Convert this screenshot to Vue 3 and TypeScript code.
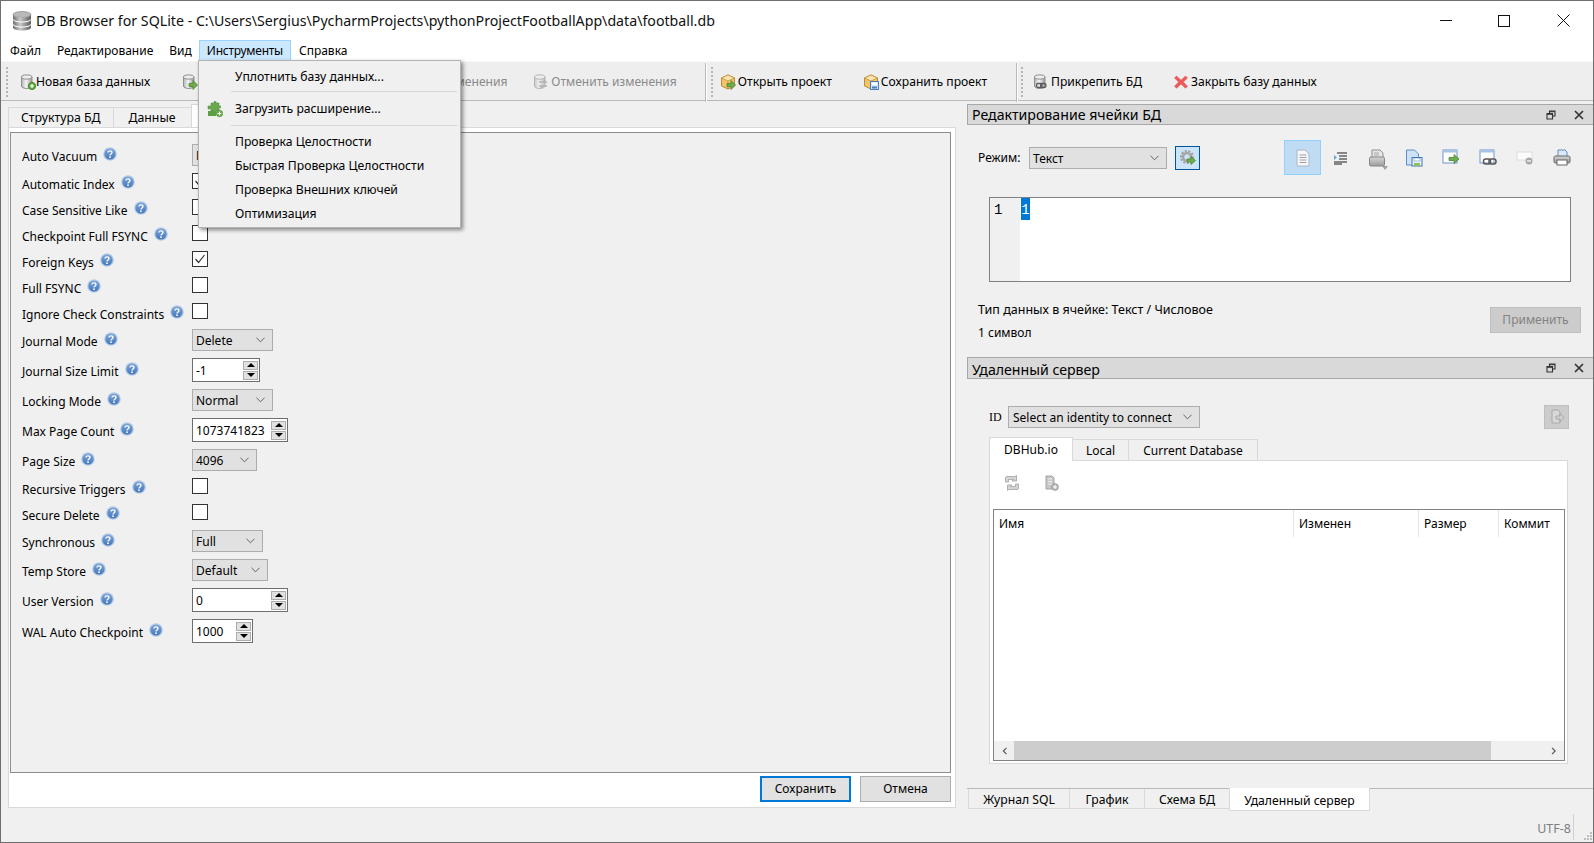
<script setup lang="ts">
interface Row { label: string; kind: 'combo' | 'check' | 'spin'; val?: string; w?: number; on?: boolean; gap: number }
const rows: Row[] = [
  { label: 'Auto Vacuum', kind: 'combo', val: 'None', w: 81, gap: 0 },
  { label: 'Automatic Index', kind: 'check', on: true, gap: 0 },
  { label: 'Case Sensitive Like', kind: 'check', gap: 0 },
  { label: 'Checkpoint Full FSYNC', kind: 'check', gap: 0 },
  { label: 'Foreign Keys', kind: 'check', on: true, gap: 0 },
  { label: 'Full FSYNC', kind: 'check', gap: 0 },
  { label: 'Ignore Check Constraints', kind: 'check', gap: 3 },
  { label: 'Journal Mode', kind: 'combo', val: 'Delete', w: 81, gap: 4 },
  { label: 'Journal Size Limit', kind: 'spin', val: '-1', w: 68, gap: 4 },
  { label: 'Locking Mode', kind: 'combo', val: 'Normal', w: 81, gap: 4 },
  { label: 'Max Page Count', kind: 'spin', val: '1073741823', w: 96, gap: 4 },
  { label: 'Page Size', kind: 'combo', val: '4096', w: 65, gap: 0 },
  { label: 'Recursive Triggers', kind: 'check', gap: 0 },
  { label: 'Secure Delete', kind: 'check', gap: 3 },
  { label: 'Synchronous', kind: 'combo', val: 'Full', w: 71, gap: 3 },
  { label: 'Temp Store', kind: 'combo', val: 'Default', w: 76, gap: 4 },
  { label: 'User Version', kind: 'spin', val: '0', w: 96, gap: 5 },
  { label: 'WAL Auto Checkpoint', kind: 'spin', val: '1000', w: 61, gap: 0 },
]
const cellIcons = ['i-indent', 'i-open', 'i-save', 'i-export', 'i-link', 'i-null', 'i-print']
</script>

<template>
  <div class="win">
    <svg class="defs" aria-hidden="true">
      <defs>
        <linearGradient id="gdb" x1="0" x2="1" y1="0" y2="0">
          <stop offset="0" stop-color="#b5b5b5" /><stop offset=".45" stop-color="#f4f4f4" /><stop offset="1" stop-color="#9a9a9a" />
        </linearGradient>
        <linearGradient id="gapp" x1="0" x2="1" y1="0" y2="0">
          <stop offset="0" stop-color="#6e6e6e" /><stop offset=".4" stop-color="#c9c9c9" /><stop offset="1" stop-color="#5c5c5c" />
        </linearGradient>
        <linearGradient id="ghelp" x1="0" x2="0" y1="0" y2="1">
          <stop offset="0" stop-color="#7ea6d8" /><stop offset="1" stop-color="#4477bb" />
        </linearGradient>
        <linearGradient id="ggray" x1="0" x2="0" y1="0" y2="1">
          <stop offset="0" stop-color="#d6d6d6" /><stop offset="1" stop-color="#9c9c9c" />
        </linearGradient>
      </defs>
      <symbol id="i-db" viewBox="0 0 16 16">
        <path d="M1.5 3v9c0 1.4 2.4 2.5 5.2 2.5s5.3-1.1 5.3-2.5V3z" fill="url(#gdb)" stroke="#8d8d8d" />
        <ellipse cx="6.700" cy="3" rx="5.200" ry="2.100" fill="#ededed" stroke="#8d8d8d" />
      </symbol>
      <symbol id="i-new" viewBox="0 0 16 16">
        <use href="#i-db" />
        <circle cx="12" cy="12" r="3.600" fill="#5eab42" stroke="#3f8a2b" />
        <path d="M12 10v4M10 12h4" stroke="#fff" stroke-width="1.200" />
      </symbol>
      <symbol id="i-opendb" viewBox="0 0 16 16">
        <use href="#i-db" />
        <path d="M7 9.500h4V6.500l4.500 4.500-4.500 4.500v-3H7z" fill="#6eae4c" stroke="#4b8433" stroke-width=".8" />
      </symbol>
      <symbol id="i-savedb" viewBox="0 0 16 16">
        <use href="#i-db" opacity=".55" />
      </symbol>
      <symbol id="i-revert" viewBox="0 0 16 16">
        <g opacity=".6">
          <use href="#i-db" />
          <path d="M6 8h7l-2-2M14 12H7l2 2" fill="none" stroke="#8c8c8c" stroke-width="1.400" />
        </g>
      </symbol>
      <symbol id="i-box" viewBox="0 0 16 16">
        <path d="M8 1l6.500 3v8L8 15l-6.500-3V4z" fill="#f3c469" stroke="#b98a37" />
        <path d="M1.500 4L8 7l6.500-3L8 1z" fill="#fbe6ad" stroke="#b98a37" stroke-width=".7" />
        <path d="M8 7v8" stroke="#b98a37" stroke-width=".7" />
      </symbol>
      <symbol id="i-boxopen" viewBox="0 0 16 16">
        <use href="#i-box" />
        <path d="M7 9.500h4V6.500l4.500 4.500-4.500 4.500v-3H7z" fill="#6eae4c" stroke="#4b8433" stroke-width=".8" />
      </symbol>
      <symbol id="i-boxsave" viewBox="0 0 16 16">
        <use href="#i-box" />
        <rect x="7.500" y="7.500" width="8" height="8" fill="#d8e8f7" stroke="#4a7fbd" />
        <rect x="9" y="8.500" width="5" height="2.500" fill="#fff" />
        <rect x="9" y="12.500" width="5" height="2" fill="#4a7fbd" />
      </symbol>
      <symbol id="i-attach" viewBox="0 0 16 16">
        <use href="#i-db" />
        <rect x="3.500" y="9.500" width="5.500" height="4" rx="1.800" fill="none" stroke="#5a5a5a" stroke-width="1.300" />
        <rect x="7.500" y="9.500" width="5.500" height="4" rx="1.800" fill="none" stroke="#5a5a5a" stroke-width="1.300" />
      </symbol>
      <symbol id="i-x" viewBox="0 0 16 16">
        <path d="M3.500 2L8 6.200 12.500 2 14.500 4 10.300 8l4.200 4.200-2 2L8 10 3.500 14.200l-2-2L5.700 8 1.500 4z" fill="#ee5a5a" stroke="#e04444" stroke-width=".5" />
      </symbol>
      <symbol id="i-help" viewBox="0 0 14 14">
        <circle cx="7" cy="7" r="6.800" fill="#b4cbe6" />
        <circle cx="7" cy="7" r="5.600" fill="url(#ghelp)" />
        <path d="M5 5.600C5 4.400 6 3.900 7 3.900s2 .6 2 1.700c0 1.300-2 1.400-2 2.800" fill="none" stroke="#fff" stroke-width="1.300" />
        <circle cx="7" cy="10.200" r=".9" fill="#fff" />
      </symbol>
      <symbol id="i-doc" viewBox="0 0 16 18">
        <path d="M2 1h8l4 4v12H2z" fill="#f7f7f7" stroke="#aab6c2" />
        <path d="M4.500 6h7M4.500 8.500h7M4.500 11h7M4.500 13.500h7" stroke="#9aa3ab" />
      </symbol>
      <symbol id="i-indent" viewBox="0 0 18 18">
        <path d="M6 4h10M8 7h8M8 10h8M3 13h13M3 15h8" stroke="#1c1c1c" stroke-width="1.100" />
        <path d="M3 6l3 2.500L3 11z" fill="#5fa9dc" />
      </symbol>
      <symbol id="i-open" viewBox="0 0 18 18">
        <path d="M4 1h8l3 3v6H4z" fill="#e6e6e6" stroke="#8f8f8f" />
        <path d="M6 4h5M6 6h5" stroke="#a8a8a8" />
        <rect x="1.500" y="8" width="15" height="9" rx="1.500" fill="url(#ggray)" stroke="#858585" />
        <path d="M3 10.500h12" stroke="#c6c6c6" />
      </symbol>
      <symbol id="i-save" viewBox="0 0 18 18">
        <path d="M1.500 1h8l4 4v11h-12z" fill="#cfe2f5" stroke="#5b8fc7" />
        <rect x="7" y="8.500" width="10" height="8.500" fill="#edf4fb" stroke="#3f76b8" />
        <rect x="9" y="9" width="6" height="3" fill="#fff" stroke="#4a7fbd" stroke-width=".5" />
        <rect x="9" y="14" width="6" height="3" fill="#8cc063" />
      </symbol>
      <symbol id="i-export" viewBox="0 0 18 18">
        <rect x="1" y="1" width="14" height="13" fill="#fff" stroke="#6f97c8" />
        <rect x="1" y="1" width="14" height="2.500" fill="#a6c3e4" />
        <path d="M7 8.500h5V5.500l5 4.500-5 4.500v-3H7z" fill="#6eae4c" stroke="#4b8433" stroke-width=".8" />
      </symbol>
      <symbol id="i-link" viewBox="0 0 18 18">
        <rect x="1" y="1" width="14" height="13" fill="#fff" stroke="#6f97c8" />
        <rect x="1" y="1" width="14" height="2.500" fill="#a6c3e4" />
        <rect x="4.500" y="10" width="7" height="5" rx="2.200" fill="none" stroke="#555" stroke-width="1.500" />
        <rect x="10" y="10" width="7" height="5" rx="2.200" fill="none" stroke="#555" stroke-width="1.500" />
      </symbol>
      <symbol id="i-null" viewBox="0 0 18 18">
        <rect x="1" y="3" width="15" height="8" fill="#fbfbfb" stroke="#dcdcdc" />
        <circle cx="13" cy="12" r="3.500" fill="#a8a8a8" />
        <path d="M11 12h4" stroke="#fff" stroke-width="1.200" />
      </symbol>
      <symbol id="i-print" viewBox="0 0 18 18">
        <path d="M5 1h7l2 2v6H5z" fill="#dbeaf8" stroke="#5b8fc7" />
        <rect x="1" y="7" width="16" height="7" rx="1.500" fill="url(#ggray)" stroke="#666" />
        <rect x="4" y="11" width="10" height="5" fill="#fff" stroke="#666" />
      </symbol>
      <symbol id="i-gear" viewBox="0 0 18 18">
        <circle cx="8" cy="8" r="6" fill="none" stroke="#a0a0a0" stroke-width="2" stroke-dasharray="2.200 1.400" />
        <circle cx="8" cy="8" r="4" fill="none" stroke="#a6a6a6" stroke-width="2.500" />
        <path d="M8 10h4V7.500l4.500 4-4.500 4V13H8z" fill="#6eae4c" stroke="#4b8433" stroke-width=".8" />
      </symbol>
      <symbol id="i-sync" viewBox="0 0 16 16">
        <path d="M1.500 7V3a1.500 1.500 0 0 1 1.500-1.500h8l1.500-1V6H8l1.500-1.500H4.500V7zM14.500 9v4a1.500 1.500 0 0 1-1.500 1.500H5l-1.500 1V10H8l-1.500 1.500h5V9z" fill="#d4d4d4" stroke="#9a9a9a" stroke-width=".7" />
      </symbol>
      <symbol id="i-srv" viewBox="0 0 16 16">
        <path d="M3 1h6l2 2v11H3z" fill="#c7c7c7" stroke="#a3a3a3" />
        <path d="M5 4h4M5 6.500h4M5 9h4" stroke="#eee" />
        <circle cx="12" cy="12" r="3.300" fill="#bdbdbd" stroke="#999" />
        <path d="M12 10.200v3.600M10.200 12h3.600" stroke="#fff" />
      </symbol>
      <symbol id="i-push" viewBox="0 0 16 16">
        <path d="M3 1h6l2 2v11H3z" fill="#d7d7d7" stroke="#a9a9a9" />
        <path d="M7 7h4V4.500l4 4-4 4V10H7z" fill="#d0d0d0" stroke="#a0a0a0" stroke-width=".8" />
      </symbol>
      <symbol id="i-puzzle" viewBox="0 0 16 18">
        <path d="M1 6h3V3h3V1.500h2V3h3v3h1.500v2H12v3H9v2H7v-2H4V9H1z" fill="#6aa84f" stroke="#4e8a38" stroke-width=".7" stroke-dasharray="1.500 .6" />
        <path d="M1 11h8v5H1z" fill="#5c9e42" />
        <circle cx="12.500" cy="13.500" r="3.200" fill="#6fb552" stroke="#4e8a38" stroke-width=".7" />
        <path d="M12.500 11.700v3.600M10.700 13.500h3.600" stroke="#fff" />
      </symbol>
      <symbol id="i-float" viewBox="0 0 10 10">
        <path d="M3.500 3.500V1h5.500v5H6.500" fill="none" stroke="#333" stroke-width="1.100" />
        <path d="M1 3.500h5.500V9H1z" fill="none" stroke="#333" stroke-width="1.100" />
        <path d="M3.500 1.700h5.500M1 4.300h5.500" stroke="#333" stroke-width="1" />
      </symbol>
      <symbol id="i-close" viewBox="0 0 10 10">
        <path d="M1 1l8 8M9 1L1 9" stroke="#333" stroke-width="1.700" />
      </symbol>
      <symbol id="i-chev" viewBox="0 0 10 6">
        <path d="M.5 .5L5 5l4.500-4.500" fill="none" stroke="#555" />
      </symbol>
    </svg>

    <header class="title">
      <svg class="appicon" viewBox="0 0 20 20">
        <ellipse cx="10" cy="3.500" rx="9" ry="3" fill="#b9b9b9" stroke="#7c7c7c" stroke-width=".6" />
        <path d="M1 3.500v4c0 1.700 4 3 9 3s9-1.300 9-3v-4c0 1.700-4 3-9 3s-9-1.300-9-3z" fill="url(#gapp)" />
        <path d="M1 8.500v4c0 1.700 4 3 9 3s9-1.300 9-3v-4c0 1.700-4 3-9 3s-9-1.300-9-3z" fill="url(#gapp)" />
        <path d="M1 13.500v3c0 1.700 4 3 9 3s9-1.300 9-3v-3c0 1.700-4 3-9 3s-9-1.300-9-3z" fill="url(#gapp)" />
      </svg>
      <span class="title-text">DB Browser for SQLite - C:\Users\Sergius\PycharmProjects\pythonProjectFootballApp\data\football.db</span>
      <div class="wbtns">
        <svg class="wb-min" width="12" height="12" viewBox="0 0 12 12"><path d="M0 5.500h12" stroke="#111" /></svg>
        <svg class="wb-max" width="12" height="12" viewBox="0 0 12 12"><rect x=".5" y=".5" width="11" height="11" fill="none" stroke="#111" /></svg>
        <svg class="wb-close" width="13" height="13" viewBox="0 0 13 13"><path d="M.5 .5l12 12M12.500 .5l-12 12" stroke="#111" /></svg>
      </div>
    </header>

    <nav class="menubar">
      <span class="mi">Файл</span>
      <span class="mi">Редактирование</span>
      <span class="mi mi-view">Вид</span>
      <span class="mi mi-on">Инструменты</span>
      <span class="mi">Справка</span>
    </nav>

    <div class="toolbar">
      <i class="grip"></i>
      <span class="tb tb1"><svg class="ic16"><use href="#i-new" /></svg>Новая база данных</span>
      <span class="tb tb2"><svg class="ic16"><use href="#i-opendb" /></svg>Открыть базу данных</span>
      <span class="tb tb3 dis"><svg class="ic16"><use href="#i-savedb" /></svg>Записать изменения</span>
      <span class="tb tb4 dis"><svg class="ic16"><use href="#i-revert" /></svg>Отменить изменения</span>
      <i class="sep"></i><i class="grip grip2"></i>
      <span class="tb tb5"><svg class="ic16"><use href="#i-boxopen" /></svg>Открыть проект</span>
      <span class="tb tb6"><svg class="ic16"><use href="#i-boxsave" /></svg>Сохранить проект</span>
      <i class="sep sep2"></i><i class="grip grip3"></i>
      <span class="tb tb7"><svg class="ic16"><use href="#i-attach" /></svg>Прикрепить БД</span>
      <span class="tb tb8"><svg class="ic16"><use href="#i-x" /></svg>Закрыть базу данных</span>
    </div>

    <main class="main">
      <section class="left">
        <div class="ltabs">
          <span class="ltab">Структура БД</span>
          <span class="ltab ltab2">Данные</span>
          <span class="ltab ltab-on">Прагмы</span>
        </div>
        <div class="lpane">
          <div class="frame">
            <div v-for="r in rows" :key="r.label" class="row" :style="{ marginBottom: r.gap + 'px' }">
              <div class="lbl" :class="{ 'lbl-cb': r.kind === 'check' }">
                <span>{{ r.label }}</span>
                <svg class="help"><use href="#i-help" /></svg>
              </div>
              <div v-if="r.kind === 'combo'" class="combo" :style="{ width: r.w + 'px' }">
                <span class="cval">{{ r.val }}</span><svg class="chev"><use href="#i-chev" /></svg>
              </div>
              <div v-else-if="r.kind === 'check'" class="check">
                <svg v-if="r.on" width="14" height="14" viewBox="0 0 14 14"><path d="M2.500 7l3 3.500 6-7.500" fill="none" stroke="#333" stroke-width="1.200" /></svg>
              </div>
              <div v-else class="spin" :style="{ width: r.w + 'px' }">
                <span class="spin-val">{{ r.val }}</span>
                <span class="spin-btns">
                  <i class="sb"><b class="up"></b></i>
                  <i class="sb"><b class="down"></b></i>
                </span>
              </div>
            </div>
          </div>
          <div class="actions">
            <button class="btn btn-def">Сохранить</button>
            <button class="btn">Отмена</button>
          </div>
        </div>
      </section>

      <section class="right">
        <div class="dock-title dt1">
          <span>Редактирование ячейки БД</span>
          <span class="dt-ic"><svg class="ic10"><use href="#i-float" /></svg><svg class="ic10"><use href="#i-close" /></svg></span>
        </div>
        <div class="dock1">
          <div class="moderow">
            <span class="modelbl">Режим:</span>
            <div class="combo mode"><span class="cval">Текст</span><svg class="chev"><use href="#i-chev" /></svg></div>
            <span class="gearbtn"><svg class="ic18"><use href="#i-gear" /></svg></span>
            <div class="cellbar">
              <span class="cb cb-on"><svg class="docic"><use href="#i-doc" /></svg></span>
              <span v-for="c in cellIcons" :key="c" class="cb">
                <svg class="ic18"><use :href="'#' + c" /></svg>
                <i v-if="c === 'i-open'" class="dropmark"></i>
              </span>
            </div>
          </div>
          <div class="editor">
            <div class="gutter">1</div>
            <div class="code"><span class="sel">1</span></div>
          </div>
          <div class="inforow">
            <div class="info">
              <div class="info1">Тип данных в ячейке: Текст / Числовое</div>
              <div>1 символ</div>
            </div>
            <button class="btn apply">Применить</button>
          </div>
        </div>

        <div class="dock-title dt2">
          <span>Удаленный сервер</span>
          <span class="dt-ic"><svg class="ic10"><use href="#i-float" /></svg><svg class="ic10"><use href="#i-close" /></svg></span>
        </div>
        <div class="dock2">
          <div class="idrow">
            <span class="idlbl">ID</span>
            <div class="combo idcombo"><span class="cval">Select an identity to connect</span><svg class="chev"><use href="#i-chev" /></svg></div>
            <span class="pushbtn"><svg class="ic16"><use href="#i-push" /></svg></span>
          </div>
          <div class="rtabs">
            <span class="rtab rtab-on">DBHub.io</span>
            <span class="rtab rt2">Local</span>
            <span class="rtab rt3">Current Database</span>
          </div>
          <div class="rpane">
            <div class="rtools">
              <svg class="ic16"><use href="#i-sync" /></svg>
              <svg class="ic16"><use href="#i-srv" /></svg>
            </div>
            <div class="table">
              <div class="thead">
                <span class="th th1">Имя</span>
                <span class="th th2">Изменен</span>
                <span class="th th3">Размер</span>
                <span class="th th4">Коммит</span>
              </div>
              <div class="tbody"></div>
              <div class="hscroll">
                <svg class="arr" width="8" height="12" viewBox="0 0 8 12"><path d="M6.500 1.500L2 6l4.500 4.500" fill="none" stroke="#555" stroke-width="1.700" /></svg>
                <div class="thumb"></div>
                <svg class="arr" width="8" height="12" viewBox="0 0 8 12"><path d="M1.500 1.500L6 6l-4.500 4.500" fill="none" stroke="#555" stroke-width="1.700" /></svg>
              </div>
            </div>
          </div>
        </div>
        <div class="btabs">
          <span class="btab bt1">Журнал SQL</span>
          <span class="btab bt2">График</span>
          <span class="btab bt3">Схема БД</span>
          <span class="btab bt-on">Удаленный сервер</span>
        </div>
      </section>
    </main>

    <footer class="status">
      <span class="enc">UTF-8</span>
      <svg class="sgrip" width="9" height="9" viewBox="0 0 9 9"><path d="M6 0h2v2H6zM3 3h2v2H3zM6 3h2v2H6zM0 6h2v2H0zM3 6h2v2H3zM6 6h2v2H6z" fill="#bdbdbd" /></svg>
    </footer>

    <div class="dropdown">
      <div class="dd">Уплотнить базу данных...</div>
      <hr class="ddsep" />
      <div class="dd dd2"><svg class="puzzle"><use href="#i-puzzle" /></svg>Загрузить расширение...</div>
      <hr class="ddsep ddsep2" />
      <div class="dd">Проверка Целостности</div>
      <div class="dd">Быстрая Проверка Целостности</div>
      <div class="dd">Проверка Внешних ключей</div>
      <div class="dd">Оптимизация</div>
    </div>
  </div>
</template>

<style>
html, body { margin: 0; padding: 0; background: #f0f0f0; }
</style>

<style scoped>
.win {
  position: relative;
  box-sizing: border-box;
  width: 1594px;
  height: 843px;
  border: 1px solid #6f6f6f;
  background: #f0f0f0;
  display: flex;
  flex-direction: column;
  font: 12px/16px "Noto Sans", "Liberation Sans", sans-serif;
  color: #000;
  overflow: hidden;
}
.defs { display: block; width: 0; height: 0; }
.title { height: 39px; flex: none; background: #fff; display: flex; align-items: center; padding-left: 11px; }
.appicon { width: 20px; height: 20px; margin-right: 4px; flex: none; }
.title-text { font-size: 14.2px; white-space: nowrap; color: #111; }
.wbtns { margin-left: auto; display: flex; align-items: center; padding-right: 23px; }
.wbtns svg { display: block; }
.wb-min { margin-right: 46px; }
.wb-max { margin-right: 47px; }
.menubar { height: 21px; flex: none; background: #fff; display: flex; align-items: stretch; padding-left: 1px; }
.mi { display: flex; align-items: center; padding: 0 7px; box-sizing: border-box; border: 1px solid transparent; white-space: nowrap; }
.mi-view { margin-right: -1px; }
.mi-on { background: #cce8ff; border-color: #99d1ff; letter-spacing: -.25px; }
.toolbar {
  height: 40px; flex: none; box-sizing: border-box;
  display: flex; align-items: center;
  background: #eeeeee;
  border-top: 1px solid #f7f7f7;
  border-bottom: 1px solid #b9b9b9;
  padding: 2px 0 0 5px;
  white-space: nowrap;
  font-size: 12.15px;
}
.grip { display: block; width: 2px; height: 30px; margin-right: 12px; flex: none;
  background: repeating-linear-gradient(to bottom, #b5b5b5 0 2px, transparent 2px 4px); }
.grip2 { margin-right: 7px; }
.grip3 { margin-right: 10px; }
.sep { display: block; width: 1px; height: 39px; background: #b9b9b9; margin-left: 28px; margin-right: 5px; box-shadow: 1px 0 0 #fff; flex: none; }
.sep2 { margin-left: 29px; margin-right: 4px; }
.tb { display: flex; align-items: center; flex: none; }
.tb svg { margin-right: 2px; flex: none; }
.tb1 svg { margin-right: 0; }
.ic16 { width: 16px; height: 16px; display: block; }
.ic18 { width: 18px; height: 18px; display: block; }
.ic10 { width: 10px; height: 10px; display: block; }
.tb1 { margin-right: 32px; }
.tb2 { margin-right: 35px; width: 150px; }
.tb3 { margin-right: 31px; width: 135px; }
.tb4 { font-size: 12px; }
.tb5 { margin-right: 31px; }
.tb7 { margin-right: 31px; }
.dis { color: #8a8a8a; }

.main { flex: 1; min-height: 0; display: flex; }
.left { width: 955px; flex: none; box-sizing: border-box; padding: 3px 0 4px 7px; display: flex; flex-direction: column; }
.ltabs { display: flex; height: 23px; flex: none; align-items: flex-end; font-size: 12.3px; }
.ltab { height: 20px; box-sizing: border-box; border: 1px solid #d9d9d9; border-bottom: none; background: #f0f0f0; display: flex; align-items: center; padding: 0 12px; margin-right: -1px; }
.ltab2 { padding: 0 15px; }
.ltab-on { height: 23px; background: #fff; padding: 0 16px; margin-right: 0; }
.lpane { flex: 1; min-height: 0; background: #fff; border: 1px solid #d9d9d9; box-sizing: border-box; padding: 4px 4px 5px 1px; display: flex; flex-direction: column; }
.frame { flex: 1; min-height: 0; box-sizing: border-box; background: #f0f0f0; border: 1px solid #8c8c8c; padding: 9px 0 0 11px; }
.row { height: 26px; display: flex; align-items: center; }
.lbl { width: 170px; flex: none; display: flex; align-items: center; padding-top: 4px; box-sizing: border-box; white-space: nowrap; }
.lbl-cb { padding-top: 8px; }
.help { width: 14px; height: 14px; margin-left: 6px; margin-bottom: 6px; display: block; flex: none; }
.combo { height: 22px; box-sizing: border-box; background: #e1e1e1; border: 1px solid #adadad; display: flex; align-items: center; justify-content: space-between; padding: 0 7px 0 3px; flex: none; white-space: nowrap; }
.cval { padding-top: 2px; }
.chev { width: 9px; height: 6px; display: block; flex: none; }
.check { width: 16px; height: 16px; box-sizing: border-box; background: #fff; border: 1px solid #333; display: flex; align-items: center; justify-content: center; flex: none; }
.check svg { display: block; flex: none; }
.spin { height: 24px; box-sizing: border-box; background: #fff; border: 1px solid #6e6e6e; display: flex; align-items: center; justify-content: space-between; padding: 0 1px 0 3px; flex: none; }
.spin-val { padding-top: 1px; }
.spin-btns { display: flex; flex-direction: column; gap: 1px; flex: none; }
.sb { display: flex; width: 15px; height: 9px; box-sizing: border-box; background: #e1e1e1; border: 1px solid #adadad; align-items: center; justify-content: center; }
.up { width: 0; height: 0; border: 4px solid transparent; border-top: none; border-bottom: 4px solid #000; }
.down { width: 0; height: 0; border: 4px solid transparent; border-bottom: none; border-top: 4px solid #000; }
.actions { display: flex; justify-content: flex-end; gap: 9px; padding-top: 3px; flex: none; }
.btn { width: 91px; height: 26px; box-sizing: border-box; font: inherit; color: #000; background: #e1e1e1; border: 1px solid #adadad; padding: 0; }
.btn-def { border: 2px solid #0078d7; }
.right { flex: 1; min-width: 0; padding-top: 3px; padding-left: 11px; display: flex; flex-direction: column; }
.dock-title { box-sizing: border-box; display: flex; align-items: center; justify-content: space-between; background: #d9d9d9; border: 1px solid #a8a8a8; border-right: none; padding-left: 4px; font-size: 14.15px; flex: none; }
.dt1 { height: 21px; }
.dt2 { height: 22px; }
.dt2 > span:first-child { padding-top: 3px; }
.dt-ic { display: flex; align-items: center; gap: 18px; padding-right: 9px; }
.dock1 { height: 232px; flex: none; box-sizing: border-box; padding-top: 15px; }
.moderow { display: flex; align-items: center; height: 35px; padding-left: 11px; }
.modelbl { width: 51px; flex: none; }
.mode { width: 138px; }
.gearbtn { width: 25px; height: 24px; box-sizing: border-box; margin-left: 8px; border: 1px solid #005499; background: #cce4f7; display: flex; align-items: center; justify-content: center; flex: none; }
.cellbar { display: flex; align-items: center; margin-left: 84px; }
.cb { position: relative; width: 37px; height: 35px; display: flex; align-items: center; justify-content: center; box-sizing: border-box; flex: none; }
.cb-on { background: #bfdcf4; border: 1px solid #91d1fb; }
.docic { width: 16px; height: 18px; display: block; }
.dropmark { position: absolute; left: 24px; top: 26px; width: 0; height: 0; border: 3.5px solid transparent; border-bottom: none; border-top: 4px solid #a0a0a0; }
.editor { margin: 22px 0 0 22px; width: 582px; height: 85px; box-sizing: border-box; background: #fff; border: 1px solid #808080; display: flex; font: 14px/24px "Liberation Mono", monospace; }
.gutter { width: 30px; flex: none; background: #f0f0f0; padding-left: 4px; box-sizing: border-box; }
.sel { display: block; margin-left: 1px; width: 9px; height: 22px; text-align: center; background: #0078d7; color: #fff; }
.inforow { display: flex; justify-content: space-between; padding: 16px 12px 0 11px; }
.info { line-height: 23px; }
.info1 { font-size: 12.5px; }
.apply { margin-top: 9px; background: #cccccc; border-color: #bfbfbf; color: #838383; }
.dock2 { flex: 1; min-height: 0; display: flex; flex-direction: column; padding: 26px 25px 0 22px; box-sizing: border-box; }
.idrow { display: flex; align-items: center; height: 24px; flex: none; }
.idlbl { width: 19px; flex: none; font-family: "Liberation Serif", serif; }
.idcombo { width: 192px; }
.idcombo .cval { padding-left: 1px; }
.pushbtn { margin-left: auto; margin-right: -1px; width: 25px; height: 24px; background: #cccccc; border: 1px solid #bfbfbf; box-sizing: border-box; display: flex; align-items: center; justify-content: center; flex: none; }
.rtabs { display: flex; align-items: flex-end; height: 24px; margin-top: 8px; flex: none; }
.rtab { height: 22px; box-sizing: border-box; border: 1px solid #d9d9d9; border-bottom: none; background: #f0f0f0; display: flex; align-items: center; justify-content: center; margin-right: -1px; flex: none; padding-top: 1px; }
.rtab-on { height: 24px; width: 84px; background: #fff; position: relative; }
.rt2 { width: 57px; }
.rt3 { width: 130px; }
.rpane { flex: 1; min-height: 0; margin-top: -1px; background: #fff; border: 1px solid #d9d9d9; box-sizing: border-box; padding: 0 2px 2px 3px; display: flex; flex-direction: column; }
.rtools { height: 48px; box-sizing: border-box; padding: 0 0 4px 11px; flex: none; display: flex; align-items: center; gap: 23px; }
.table { flex: 1; min-height: 0; border: 1px solid #828282; box-sizing: border-box; display: flex; flex-direction: column; }
.thead { height: 27px; flex: none; display: flex; }
.th { box-sizing: border-box; display: flex; align-items: center; padding-left: 5px; border-right: 1px solid #e5e5e5; flex: none; }
.th1 { width: 300px; }
.th2 { width: 125px; }
.th3 { width: 80px; }
.th4 { flex: 1; border-right: none; }
.tbody { flex: 1; min-height: 0; }
.hscroll { height: 19px; flex: none; background: #f0f0f0; display: flex; align-items: center; justify-content: space-between; padding: 0 8px; }
.thumb { width: 477px; height: 19px; background: #cdcdcd; margin-left: 6px; margin-right: 60px; flex: none; }
.btabs { height: 23px; flex: none; display: flex; border-top: 1px solid #b9b9b9; padding-left: 1px; margin-top: 24px; font-size: 12.2px; }
.btab { height: 20px; box-sizing: border-box; border: 1px solid #d9d9d9; border-top: none; background: #f0f0f0; display: flex; align-items: center; justify-content: center; margin-right: -1px; flex: none; padding-top: 2px; }
.bt1 { width: 102px; }
.bt2 { width: 76px; }
.bt3 { width: 86px; }
.bt-on { width: 141px; height: 23px; margin-top: -1px; background: #fff; padding-top: 3px; }
.status { height: 30px; flex: none; position: relative; display: flex; align-items: center; justify-content: flex-end; padding-right: 19px; }
.enc { color: #7d7d7d; font-size: 12.5px; padding: 3px 2px 0 0; box-sizing: border-box; border-right: 1px solid #d0d0d0; height: 26px; display: flex; align-items: center; }
.sgrip { position: absolute; right: 0; bottom: 1px; }
.dropdown { position: absolute; left: 197px; top: 59px; width: 263px; height: 168px; box-sizing: border-box; background: #f0f0f0; border: 1px solid #b4b4b4; box-shadow: 2px 2px 4px rgba(0, 0, 0, .45); padding-top: 4px; font-size: 12.2px; }
.dd { height: 24px; display: flex; align-items: center; padding-left: 36px; position: relative; white-space: nowrap; }
.ddsep { height: 1px; border: none; background: #d7d7d7; margin: 2px 3px 2px 32px; }
.ddsep2 { margin-bottom: 4px; }
.dd2 { height: 29px; }
.puzzle { position: absolute; left: 8px; top: 6px; width: 16px; height: 18px; }
</style>
